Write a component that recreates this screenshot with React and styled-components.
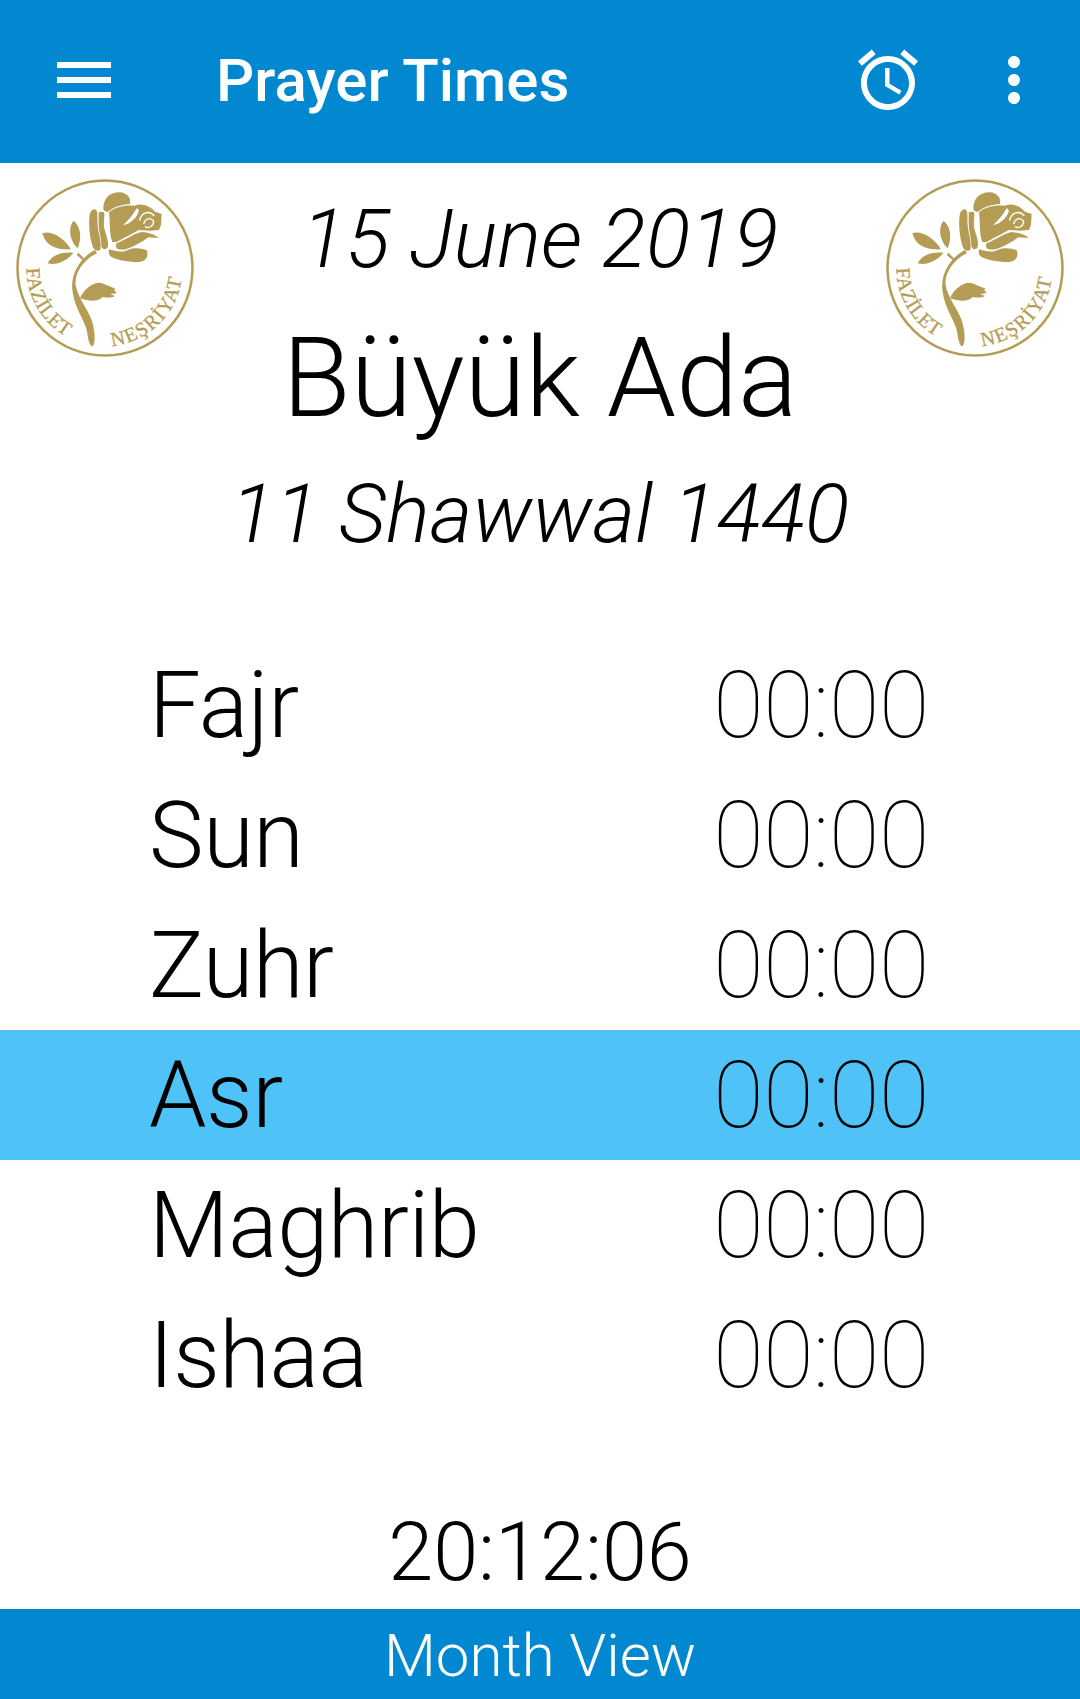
import styled, { createGlobalStyle } from "styled-components";
import { MdMenu, MdAccessAlarm, MdMoreVert } from "react-icons/md";

const GlobalStyle = createGlobalStyle`
  html, body {
    margin: 0;
    padding: 0;
    background: #fff;
    font-family: Roboto, "Liberation Sans", sans-serif;
  }
`;

const Screen = styled.div`
  width: 1080px;
  height: 1699px;
  display: flex;
  flex-direction: column;
  overflow: hidden;
`;

const Toolbar = styled.header`
  height: 163px;
  padding-bottom: 4px;
  box-sizing: border-box;
  background: #0288d1;
  color: #fff;
  display: flex;
  align-items: center;
  flex-shrink: 0;

  svg {
    width: 72px;
    height: 72px;
    display: block;
  }
`;

const IconButton = styled.div`
  margin-left: ${(p) => p.$left}px;
  display: flex;
`;

const Title = styled.h1`
  margin: 2px 0 0 96px;
  flex: 1;
  font-size: 60px;
  font-weight: 500;
`;

const Heading = styled.section`
  display: grid;
  grid-template-columns: 210px 1fr 210px;
  height: 477px;
`;

const LogoCell = styled.div`
  padding: 15px 0 0 15px;
`;

const Dates = styled.div`
  display: flex;
  flex-direction: column;
  align-items: center;
  padding-top: 28px;
`;

const DateLine = styled.div`
  font-size: 82px;
  font-weight: 300;
  font-style: italic;
  line-height: 96px;
  white-space: nowrap;
`;

const Place = styled.div`
  font-size: 111px;
  font-weight: 300;
  line-height: 130px;
  margin: 26px 0 23px;
  white-space: nowrap;
`;

const Times = styled.section`
  display: flex;
  flex-direction: column;
`;

const Row = styled.div`
  height: 130px;
  padding: 0 151px 0 149px;
  display: flex;
  justify-content: space-between;
  align-items: center;
  background: ${(p) => (p.$active ? "#4fc3f7" : "transparent")};
`;

const Name = styled.span`
  font-size: 92px;
  font-weight: 300;
  letter-spacing: -0.4px;
`;

const Time = styled.span`
  font-size: 92px;
  font-weight: 100;
  letter-spacing: -0.4px;
`;

const Clock = styled.div`
  margin-top: auto;
  text-align: center;
  font-size: 81px;
  font-weight: 300;
  line-height: 94px;
  padding-bottom: 9px;
`;

const MonthBar = styled.footer`
  height: 90px;
  box-sizing: border-box;
  padding-top: 4px;
  background: #0288d1;
  color: #fff;
  text-align: center;
  font-size: 60px;
  font-weight: 300;
  line-height: 86px;
  flex-shrink: 0;
`;

const gold = "#b59c55";

function Logo({ id }) {
  return (
    <svg width="180" height="180" viewBox="0 -1 180 180" role="img" aria-label="Fazilet Neşriyat">
      <circle cx="90" cy="89" r="87.5" fill="none" stroke={gold} strokeWidth="2.5" />
      {/* rose head and leaves, traced at 3x */}
      <g transform="translate(20 1) scale(0.3333)" fill={gold}>
        <path d="M205 85C205 55 225 36 255 37C275 38 290 55 285 72C262 74 240 78 218 96C210 95 205 92 205 85Z" />
        <path d="M222 97C240 80 270 74 300 77C320 68 345 78 360 95L380 102L378 135L372 150L345 152L312 150C295 160 270 172 245 186L232 186C222 160 226 125 222 97Z" />
        <path d="M245 190C270 180 298 160 320 156C345 158 362 166 372 174L340 172L325 182C300 196 270 216 247 206C242 202 242 195 245 190Z" />
        <path d="M222 208C240 212 260 220 280 209C300 201 320 205 335 210C342 225 335 245 310 246C285 247 240 240 225 228C222 222 220 214 222 208Z" />
        <path d="M165 100C172 84 184 84 187 98C188 115 186 130 190 150C193 170 200 190 196 210C185 215 175 212 170 190C163 160 160 125 165 100Z" />
        <path d="M191 97L205 95C212 100 205 120 207 140C210 160 225 185 217 205C206 211 197 206 199 190C197 170 191 150 191 130Z" />
        <path d="M22 160C45 150 85 170 108 208C75 210 35 205 22 160Z" />
        <path d="M115 123C130 130 145 165 128 205C110 190 95 150 115 123Z" />
        <path d="M38 250C50 225 80 215 115 218C100 240 65 258 38 250Z" />
        <path d="M125 225L130 218L147 235L143 240Z" />
        <path d="M306 84C296 100 284 118 264 136C286 130 304 116 312 92Z" fill="#fff" />
        <path d="M314 122C318 96 345 90 358 108M326 132C330 116 346 110 356 124C356 140 340 146 330 140" fill="none" stroke="#fff" strokeWidth="4" />
      </g>
      <path
        d="M80 71C66 78 55 95 57.5 112C60 130 69 140 72 152C73 160 74 165 77 167.5C81 165 80 152 77 142C73 130 62 118 60.5 105C60 92 70 80 82 74Z"
        fill={gold}
      />
      <g transform="translate(0 81) scale(0.3333)" fill={gold}>
        <path d="M195 115C205 90 230 68 255 68C270 72 280 78 300 85L298 90L305 100L285 102L300 108C290 115 270 112 262 112C250 125 225 125 195 115Z" />
      </g>
      <path id={`${id}-left`} d="M11.5 89A78.5 78.5 0 0 0 52 158" fill="none" />
      <path id={`${id}-right`} d="M97 167A78 78 0 0 0 167 96" fill="none" />
      <text fill={gold} stroke={gold} strokeWidth="0.3" fontFamily="Liberation Serif, serif" fontSize="20" letterSpacing="0.5">
        <textPath href={`#${id}-left`}>FAZİLET</textPath>
      </text>
      <text fill={gold} stroke={gold} strokeWidth="0.3" fontFamily="Liberation Serif, serif" fontSize="20" letterSpacing="1.4">
        <textPath href={`#${id}-right`}>NEŞRİYAT</textPath>
      </text>
    </svg>
  );
}

const prayers = [
  { name: "Fajr", time: "00:00" },
  { name: "Sun", time: "00:00" },
  { name: "Zuhr", time: "00:00" },
  { name: "Asr", time: "00:00", active: true },
  { name: "Maghrib", time: "00:00" },
  { name: "Ishaa", time: "00:00" },
];

export default function App() {
  return (
    <Screen>
      <GlobalStyle />
      <Toolbar>
        <IconButton $left={48}>
          <MdMenu />
        </IconButton>
        <Title>Prayer Times</Title>
        <IconButton $left={0}>
          <MdAccessAlarm />
        </IconButton>
        <IconButton $left={54}>
          <MdMoreVert />
        </IconButton>
        <IconButton $left={30} />
      </Toolbar>
      <Heading>
        <LogoCell>
          <Logo id="logo-a" />
        </LogoCell>
        <Dates>
          <DateLine>15 June 2019</DateLine>
          <Place>Büyük Ada</Place>
          <DateLine>11 Shawwal 1440</DateLine>
        </Dates>
        <LogoCell>
          <Logo id="logo-b" />
        </LogoCell>
      </Heading>
      <Times>
        {prayers.map((p) => (
          <Row key={p.name} $active={p.active}>
            <Name>{p.name}</Name>
            <Time>{p.time}</Time>
          </Row>
        ))}
      </Times>
      <Clock>20:12:06</Clock>
      <MonthBar>Month View</MonthBar>
    </Screen>
  );
}
